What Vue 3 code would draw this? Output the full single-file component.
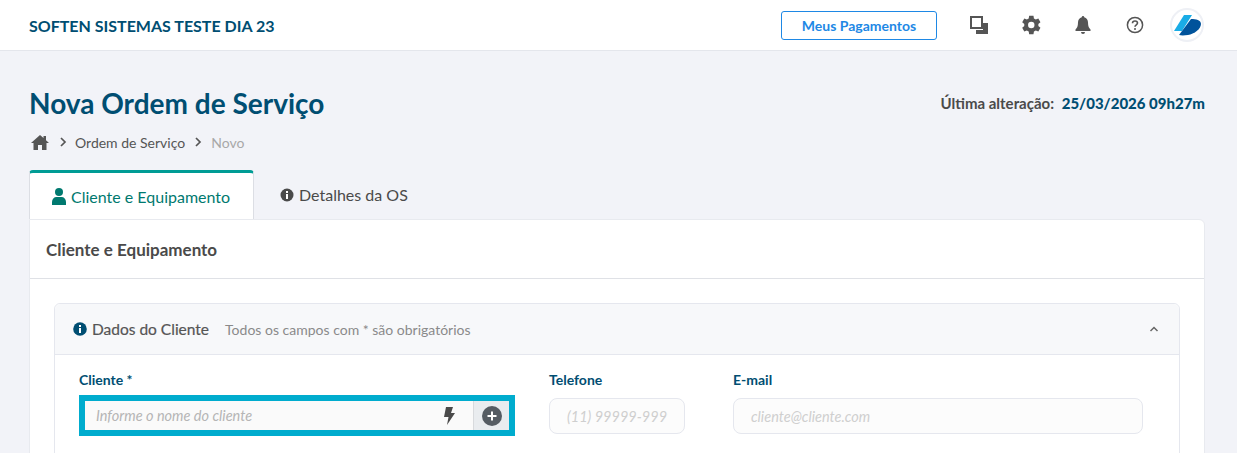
<template>
  <div class="app">
    <header class="topbar">
      <span class="company">SOFTEN SISTEMAS TESTE DIA 23</span>
      <div class="topbar-right">
        <button class="pay-btn">Meus Pagamentos</button>
        <svg class="top-icon windows" viewBox="0 0 18 18" width="18" height="18">
          <path fill="#555" d="M6 14h7V7h5v11H6z" />
          <path fill="none" stroke="#555" stroke-width="2" d="M1 1h11v11H1z" />
        </svg>
        <svg class="top-icon gear" viewBox="0 0 24 24" width="22" height="22">
          <path fill="#555" d="M20 13.200a8 8 0 0 0 0-2.400l2.300-1.800-2.300-4-2.800 1.100a8 8 0 0 0-2-1.200L14.700 2H10l-.5 2.900a8 8 0 0 0-2 1.200L4.700 5l-2.300 4 2.300 1.800a8 8 0 0 0 0 2.400L2.400 15l2.300 4 2.800-1.100a8 8 0 0 0 2 1.200L10 22h4.700l.5-2.900a8 8 0 0 0 2-1.200L20 19l2.300-4zM12.300 15.500a3.500 3.500 0 1 1 0-7 3.500 3.500 0 0 1 0 7z" />
        </svg>
        <svg class="top-icon bell" viewBox="0 0 16 18" width="16" height="18">
          <path fill="#555" d="M8 0a1.200 1.200 0 0 0-1.200 1.300C4.300 1.900 3 4 3 6.500c0 4-1 5.500-2.500 7V15h15v-1.500C14 12 13 10.500 13 6.500c0-2.500-1.300-4.600-3.800-5.200A1.200 1.200 0 0 0 8 0zM6 16a2 2 0 0 0 4 0z" />
        </svg>
        <svg class="top-icon help" viewBox="0 0 18 18" width="18" height="18">
          <circle cx="9" cy="9" r="7.600" fill="none" stroke="#555" stroke-width="1.500" />
          <path fill="none" stroke="#555" stroke-width="1.600" d="M6.500 7.200C6.500 5.700 7.700 5 9 5s2.500.8 2.500 2.100c0 1.800-2.500 1.800-2.500 3.700" />
          <circle cx="9" cy="13" r="1" fill="#555" />
        </svg>
        <div class="avatar">
          <svg viewBox="0 0 34 34" width="34" height="34">
            <path fill="#19ace6" d="M4 23 14 7h8L12 23z" />
            <path fill="#00539b" d="M21 11c5 0 10 1 10 5 0 5-7 10-13 11-4 .6-7 .6-9 0z" />
          </svg>
        </div>
      </div>
    </header>

    <main class="page">
      <div class="title-row">
        <h1>Nova Ordem de Serviço</h1>
        <div class="last-change">Última alteração: <b>25/03/2026 09h27m</b></div>
      </div>

      <nav class="crumbs">
        <svg viewBox="0 0 18 15" width="18" height="15">
          <path fill="#555" d="M9 0 0 8h2.500v7h4.500v-5h4v5h4.500V8H18l-3-2.700V1h-2.500v2z" />
        </svg>
        <svg class="chev" viewBox="0 0 8 10" width="8" height="10">
          <path fill="none" stroke="#555" stroke-width="1.700" d="m2 1 4 4-4 4" />
        </svg>
        <span>Ordem de Serviço</span>
        <svg class="chev" viewBox="0 0 8 10" width="8" height="10">
          <path fill="none" stroke="#555" stroke-width="1.700" d="m2 1 4 4-4 4" />
        </svg>
        <span class="muted">Novo</span>
      </nav>

      <div class="tabs">
        <div class="tab active">
          <svg viewBox="0 0 14 17" width="14" height="17">
            <circle cx="7" cy="4" r="4" fill="#00796f" />
            <path fill="#00796f" d="M0 17v-3c0-3 2-5 4.500-5h5c2.500 0 4.500 2 4.500 5v3z" />
          </svg>
          Cliente e Equipamento
        </div>
        <div class="tab">
          <svg viewBox="0 0 14 14" width="14" height="14">
            <circle cx="7" cy="7" r="6.500" fill="#4a4a4a" />
            <rect x="6" y="6" width="2" height="5" fill="#fff" />
            <rect x="6" y="3" width="2" height="2" fill="#fff" />
          </svg>
          Detalhes da OS
        </div>
      </div>

      <section class="card">
        <div class="card-head">Cliente e Equipamento</div>
        <div class="card-body">
          <div class="panel">
            <div class="panel-head">
              <svg viewBox="0 0 14 14" width="14" height="14">
                <circle cx="7" cy="7" r="6.800" fill="#004e72" />
                <rect x="6" y="6" width="2" height="5" fill="#fff" />
                <rect x="6" y="3" width="2" height="2" fill="#fff" />
              </svg>
              <span class="panel-title">Dados do Cliente</span>
              <span class="panel-note">Todos os campos com * são obrigatórios</span>
              <svg class="collapse" viewBox="0 0 10 6" width="10" height="6">
                <path fill="none" stroke="#666" stroke-width="1.500" d="m1.500 5 3.500-3.500L8.500 5" />
              </svg>
            </div>
            <div class="fields">
              <div class="field">
                <label>Cliente *</label>
                <div class="client-input">
                  <span class="ph">Informe o nome do cliente</span>
                  <svg class="bolt" viewBox="0 0 12 18" width="12" height="18">
                    <path fill="#4a4a4a" d="M3 0h7L8 6h4L4 18l1.500-8H1z" />
                  </svg>
                  <span class="addon">
                    <svg viewBox="0 0 20 20" width="20" height="20">
                      <circle cx="10" cy="10" r="10" fill="#555c63" />
                      <path stroke="#fff" stroke-width="2" d="M10 5.500v9M5.500 10h9" />
                    </svg>
                  </span>
                </div>
              </div>
              <div class="field">
                <label>Telefone</label>
                <div class="input phone"><span class="ph-clip">(11) 99999-9999</span></div>
              </div>
              <div class="field">
                <label>E-mail</label>
                <div class="input email">cliente@cliente.com</div>
              </div>
            </div>
          </div>
        </div>
      </section>
    </main>
  </div>
</template>

<script setup>
</script>

<style>
html, body {
  margin: 0;
  background: #f2f3f8;
  overflow: hidden;
}
</style>

<style scoped>
.app {
  font-family: Lato, "Open Sans", sans-serif;
  height: 453px;
  overflow: hidden;
  color: #4a4a4a;
}

.topbar {
  height: 50px;
  background: #fff;
  border-bottom: 1px solid #e4e6ec;
  display: flex;
  align-items: center;
  justify-content: space-between;
  padding: 0 33px 0 29px;
}

.company {
  font-size: 16px;
  font-weight: 700;
  color: #004e72;
}

.topbar-right {
  display: flex;
  align-items: center;
}

.pay-btn {
  width: 156px;
  height: 29px;
  background: #fff;
  border: 1px solid #1e88e5;
  border-radius: 3px;
  color: #1e88e5;
  font-family: inherit;
  font-size: 14px;
  font-weight: 700;
  margin-right: 33px;
  padding: 0;
}

.top-icon { flex: none; }
.windows { margin-right: 32px; }
.gear { margin-right: 33px; }
.bell { margin-right: 35px; }
.help { margin-right: 26px; }

.avatar {
  width: 34px;
  height: 34px;
  border-radius: 50%;
  background: #fff;
  box-shadow: inset 0 0 0 2px #eef0f5;
}

.page {
  padding: 0 32px 0 29px;
}

.title-row {
  display: flex;
  justify-content: space-between;
  align-items: flex-start;
  padding-top: 34px;
}

h1 {
  margin: 0;
  font-size: 28px;
  line-height: 36px;
  font-weight: 700;
  color: #004e72;
}

.last-change {
  font-size: 15px;
  font-weight: 700;
  line-height: 36px;
  color: #4a4a4a;
}

.last-change b {
  color: #004e72;
  margin-left: 4px;
}

.crumbs {
  display: flex;
  align-items: center;
  height: 20px;
  margin-top: 11px;
  padding-left: 2px;
  font-size: 14px;
  color: #555;
}

.chev { margin: 0 8px 0 10px; }
.crumbs span + .chev { margin: 0 9px 0 9px; }
.muted { color: #a8a8a8; }

.tabs {
  display: flex;
  margin-top: 18px;
  height: 49px;
}

.tab {
  display: flex;
  align-items: center;
  gap: 5px;
  padding: 0 19px 0 26px;
  font-size: 16px;
}

.tab.active {
  width: 225px;
  box-sizing: border-box;
  padding: 0 0 0 22px;
  background: #fff;
  color: #00796f;
  border: 1px solid #dcdee4;
  border-top: 3px solid #009c95;
  border-bottom: none;
  border-radius: 4px 4px 0 0;
}

.card {
  background: #fff;
  border: 1px solid #e8eaef;
  border-radius: 0 6px 0 0;
  height: 300px;
  box-sizing: border-box;
}

.card-head {
  height: 59px;
  box-sizing: border-box;
  border-bottom: 1px solid #dfe1e6;
  padding: 0 16px;
  display: flex;
  align-items: center;
  font-size: 17px;
  font-weight: 700;
  color: #4a4a4a;
}

.card-body {
  padding: 24px 24px 0;
}

.panel {
  border: 1px solid #e5e7ee;
  border-radius: 6px 6px 0 0;
  height: 200px;
}

.panel-head {
  height: 50px;
  background: #f7f8fa;
  border-bottom: 1px solid #e5e7ee;
  border-radius: 6px 6px 0 0;
  display: flex;
  align-items: center;
  padding: 0 20px 0 18px;
}

.panel-title {
  font-size: 15.500px;
  font-weight: 400;
  margin-left: 5px;
  color: #555;
  -webkit-text-stroke: 0.2px #555;
}

.panel-note {
  font-size: 14px;
  color: #8a8a8a;
  margin-left: 16px;
}

.collapse { margin-left: auto; }

.fields {
  display: flex;
  padding: 16px 0 0 24px;
}

.field label {
  display: block;
  font-size: 14px;
  font-weight: 700;
  line-height: 18px;
  color: #004e72;
  margin-bottom: 9px;
}

.field:nth-child(1) { margin-right: 34px; }
.field:nth-child(2) { margin-right: 48px; }

.client-input {
  width: 424px;
  height: 29px;
  margin: 12px 6px 0;
  outline: 6px solid #00acce;
  background: #fafafa;
  display: flex;
  align-items: center;
  font-style: italic;
  font-size: 14.500px;
  color: #b5b5b5;
}

.ph {
  padding-left: 11px;
  flex: 1;
}

.bolt { margin-right: 18px; }

.addon {
  width: 36px;
  height: 29px;
  background: #e9ecef;
  border-left: 1px solid #d8dadd;
  box-sizing: border-box;
  display: flex;
  align-items: center;
  justify-content: center;
}

.input {
  height: 36px;
  box-sizing: border-box;
  border: 1px solid #e5e7ee;
  border-radius: 8px;
  background: #fcfcfc;
  font-style: italic;
  font-size: 14.500px;
  color: #cfcfcf;
  display: flex;
  align-items: center;
}

.phone {
  width: 136px;
  padding: 0 0 0 17px;
}

.ph-clip {
  display: block;
  width: 101px;
  overflow: hidden;
  white-space: nowrap;
}

.email {
  width: 410px;
  padding-left: 17px;
}
</style>
